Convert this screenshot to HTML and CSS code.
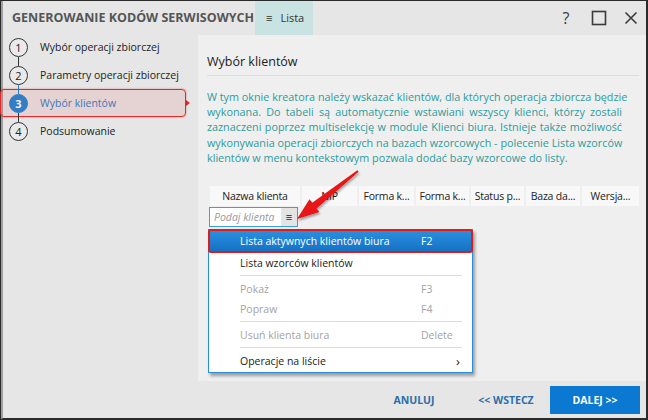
FILE: index.html
```html
<!DOCTYPE html>
<html lang="pl">
<head>
    <meta charset="UTF-8">
    <title>Generowanie kodów serwisowych</title>
    <link rel="stylesheet" href="styles.css">
</head>
<body>
    <div class="window">
        <div class="titlebar">
            <div class="title">GENEROWANIE KODÓW SERWISOWYCH</div>
            <div class="tab"><span class="tab-icon">≡</span>Lista</div>
            <div class="win-controls">
                <span class="ctl ctl-help">?</span>
                <svg class="ctl" width="16" height="16" viewBox="0 0 16 16"><rect x="1.5" y="1.5" width="13" height="13" fill="none" stroke="#3a3a3a" stroke-width="1.6"/></svg>
                <svg class="ctl" width="16" height="16" viewBox="0 0 16 16"><path d="M2.5 2.5 L13.5 13.5 M13.5 2.5 L2.5 13.5" stroke="#3a3a3a" stroke-width="1.6"/></svg>
            </div>
        </div>

        <div class="main">
            <aside class="steps">
                <div class="step"><span class="num">1</span>Wybór operacji zbiorczej</div>
                <div class="step"><span class="num">2</span>Parametry operacji zbiorczej</div>
                <div class="step active"><span class="num">3</span>Wybór klientów</div>
                <div class="step"><span class="num">4</span>Podsumowanie</div>
            </aside>

            <section class="panel">
                <h2 class="panel-title">Wybór klientów</h2>
                <p class="info">
                    <span>W tym oknie kreatora należy wskazać klientów, dla których operacja zbiorcza będzie</span>
                    <span>wykonana. Do tabeli są automatycznie wstawiani wszyscy klienci, którzy zostali</span>
                    <span>zaznaczeni poprzez multiselekcję w module Klienci biura. Istnieje także możliwość</span>
                    <span>wykonywania operacji zbiorczych na bazach wzorcowych - polecenie Lista wzorców</span>
                    <span>klientów w menu kontekstowym pozwala dodać bazy wzorcowe do listy.</span>
                </p>

                <div class="grid-head">
                    <div class="col">Nazwa klienta</div>
                    <div class="col">NIP</div>
                    <div class="col">Forma k...</div>
                    <div class="col">Forma k...</div>
                    <div class="col">Status p...</div>
                    <div class="col">Baza da...</div>
                    <div class="col">Wersja...</div>
                </div>

                <div class="filter">
                    <span class="filter-input">Podaj klienta</span>
                    <span class="filter-btn">≡</span>
                </div>

                <div class="menu">
                    <div class="menu-item selected"><span>Lista aktywnych klientów biura</span><span>F2</span></div>
                    <div class="menu-item"><span>Lista wzorców klientów</span><span></span></div>
                    <div class="menu-sep"></div>
                    <div class="menu-item disabled"><span>Pokaż</span><span>F3</span></div>
                    <div class="menu-item disabled"><span>Popraw</span><span>F4</span></div>
                    <div class="menu-sep"></div>
                    <div class="menu-item disabled"><span>Usuń klienta biura</span><span>Delete</span></div>
                    <div class="menu-sep"></div>
                    <div class="menu-item"><span>Operacje na liście</span><span class="sub">›</span></div>
                </div>
            </section>
        </div>

        <div class="footer">
            <button class="btn btn-link btn-cancel">ANULUJ</button>
            <button class="btn btn-link">&lt;&lt; WSTECZ</button>
            <button class="btn btn-primary">DALEJ &gt;&gt;</button>
        </div>

        <!-- strzałka z adnotacji -->
        <svg class="arrow" width="648" height="420" viewBox="0 0 648 420">
            <defs>
                <filter id="sh" x="-20%" y="-20%" width="140%" height="140%">
                    <feDropShadow dx="1" dy="2" stdDeviation="1.2" flood-color="#000" flood-opacity="0.35"/>
                </filter>
            </defs>
            <polygon filter="url(#sh)" fill="#e81212"
                points="297,219 319.3,211.9 316.5,208.4 358.6,171.8 357.4,170.2 312.3,202.8 309.5,199.3"/>
        </svg>
    </div>
</body>
</html>
```

FILE: styles.css
```css
* {
    margin: 0;
    padding: 0;
    box-sizing: border-box;
}

body {
    font-family: 'Open Sans', 'Noto Sans', sans-serif;
    color: #222;
    background: #fff;
}

.window {
    position: relative;
    width: 648px;
    height: 420px;
    display: flex;
    flex-direction: column;
    background-color: #e6e6e6;
    border: 2px solid #2a2a2a;
    border-top-width: 1px;
    border-left: 3px solid #a0a0a0;
    outline: 1px solid #2a2a2a;
    outline-offset: -1px;
}

/* pasek tytułu */
.titlebar {
    height: 34px;
    display: flex;
    align-items: stretch;
    flex-shrink: 0;
}

.title {
    padding-left: 9px;
    width: 252px;
    font-size: 12.5px;
    font-weight: bold;
    color: #555;
    line-height: 34px;
    white-space: nowrap;
}

.tab {
    width: 58px;
    padding-left: 11px;
    background-color: #c9e3e3;
    font-size: 11px;
    line-height: 34px;
    color: #333;
}

.tab-icon {
    margin-right: 8px;
}

.win-controls {
    margin-left: auto;
    display: flex;
    align-items: center;
    gap: 16px;
    padding-right: 7px;
}

.ctl-help {
    font-size: 16px;
    color: #3a3a3a;
    width: 16px;
    margin-right: 1px;
    text-align: center;
}

/* część główna */
.main {
    flex: 1;
    display: flex;
}

.steps {
    width: 195px;
    display: flex;
    flex-direction: column;
    gap: 4px;
}

.step {
    position: relative;
    height: 24px;
    margin-right: 12px;
    display: flex;
    align-items: center;
    padding-left: 6px;
    font-size: 10.5px;
    color: #222;
}

.num {
    width: 19px;
    height: 19px;
    margin-right: 12px;
    border: 1.5px solid #333;
    border-radius: 50%;
    display: flex;
    align-items: center;
    justify-content: center;
    font-size: 11px;
    background-color: #eaeaea;
}

.step + .step .num::before {
    content: '';
    position: absolute;
    left: 14.75px;
    top: -6.5px;
    width: 1.5px;
    height: 9px;
    background-color: #333;
}

.step.active .num::before {
    background-color: #1a86d8;
}

.step.active {
    color: #2a7fc8;
}

.step.active .num {
    background-color: #1a86d8;
    border-color: #1a86d8;
    color: #fff;
    font-weight: bold;
}

/* czerwona ramka z adnotacji */
.step.active::after {
    content: '';
    position: absolute;
    left: -3px;
    right: 0;
    top: -2px;
    bottom: -2px;
    border: 1.5px solid #e02a2a;
    border-radius: 4px;
    background-color: rgba(220, 70, 70, 0.12);
    box-shadow: 0 0 2px rgba(220, 0, 0, 0.5);
}

.step.active::before {
    content: '';
    position: absolute;
    right: -4px;
    top: 9px;
    border-left: 4px solid #e02a2a;
    border-top: 3px solid transparent;
    border-bottom: 3px solid transparent;
}

.panel {
    position: relative;
    flex: 1;
    background-color: #efefef;
    padding: 18px 7px 0 9px;
}

.panel-title {
    font-size: 12.5px;
    font-weight: normal;
    line-height: 18px;
    color: #222;
    padding-bottom: 4px;
    border-bottom: 1px solid #dcdcdc;
}

.info {
    margin-top: 13px;
    width: 415px;
    font-size: 10.8px;
    line-height: 15.2px;
    color: #2b9c9c;
}

.info span {
    display: block;
    text-align: justify;
    text-align-last: justify;
    white-space: nowrap;
}

.info span:last-child {
    text-align-last: auto;
}

.grid-head {
    margin: 21px 0 0 3px;
    display: grid;
    grid-template-columns: 90px 55px 55px 53px 53px 54px 57px;
    gap: 2px;
    height: 20px;
}

.col {
    background-color: #f8f8f8;
    font-size: 10.5px;
    line-height: 20px;
    text-align: center;
    white-space: nowrap;
    overflow: hidden;
    letter-spacing: -0.2px;
}

.filter {
    margin: 1px 0 0 2px;
    width: 89px;
    height: 20px;
    display: flex;
    border: 1px solid #3ca0e0;
    background-color: #fff;
}

.filter-input {
    flex: 1;
    padding-left: 4px;
    font-size: 10.5px;
    font-style: italic;
    line-height: 18px;
    color: #9a9a9a;
}

.filter-btn {
    width: 16px;
    background-color: #e4e4e4;
    text-align: center;
    font-size: 11px;
    line-height: 18px;
    color: #222;
}

/* menu kontekstowe */
.menu {
    position: absolute;
    left: 10px;
    top: 194px;
    width: 265px;
    background-color: #fff;
    border: 1px solid #2b8fd8;
    box-shadow: 2px 3px 3px rgba(0, 0, 0, 0.35);
    padding-bottom: 1px;
}

.menu-item {
    height: 20px;
    display: grid;
    grid-template-columns: 181px 1fr;
    align-items: center;
    padding-left: 31px;
    font-size: 10.5px;
    color: #222;
}

.menu-item.selected {
    height: 24px;
    margin: -1px -1px 0;
    padding-left: 30px;
    border: 2px solid #dd1c1c;
    border-radius: 3px;
    background: linear-gradient(#2a8fdf, #1572c4);
    color: #fff;
}

.menu-item.disabled {
    color: #a3a3a3;
}

.menu-item .sub {
    padding-left: 35px;
    font-size: 13px;
}

.menu-sep {
    height: 1px;
    margin: 2px 10px 3px 31px;
    background-color: #dcdcdc;
}

/* przyciski */
.footer {
    height: 37px;
    flex-shrink: 0;
    display: flex;
    justify-content: flex-end;
    align-items: center;
    gap: 4px;
    padding-right: 6px;
}

.btn {
    height: 28px;
    border: none;
    font-family: inherit;
    font-size: 10.5px;
    font-weight: bold;
    cursor: pointer;
}

.btn-link {
    width: 80px;
    background: none;
    color: #2a6fa8;
}

.btn-cancel {
    margin-right: 8px;
}

.btn-primary {
    width: 90px;
    background-color: #0b78d1;
    color: #fff;
}

.arrow {
    position: absolute;
    left: -3px;
    top: -1px;
    pointer-events: none;
}
```
